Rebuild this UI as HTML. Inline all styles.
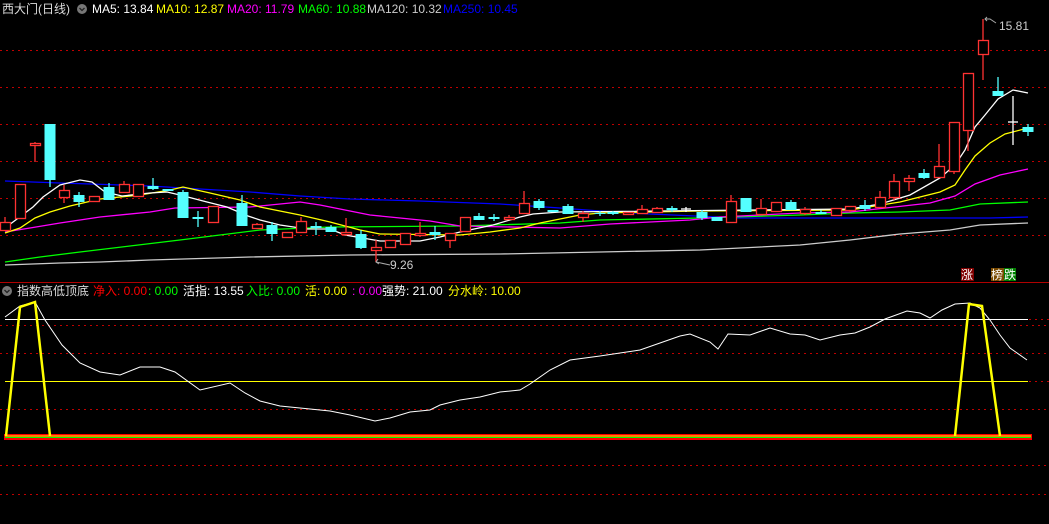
<!DOCTYPE html>
<html><head><meta charset="utf-8"><style>
body{margin:0;background:#000;width:1049px;height:524px;overflow:hidden;position:relative;font-family:"Liberation Sans","Noto Sans CJK SC",sans-serif;font-size:12px}
.t{position:absolute;white-space:nowrap;line-height:14px}
svg{position:absolute;left:0;top:0}
</style></head><body>
<svg width="1049" height="524" viewBox="0 0 1049 524">
<g stroke="#c00000" stroke-dasharray="2,4" stroke-width="1">
<line x1="0" y1="50.5" x2="1049" y2="50.5"/><line x1="0" y1="87.5" x2="1049" y2="87.5"/><line x1="0" y1="124.5" x2="1049" y2="124.5"/><line x1="0" y1="161.5" x2="1049" y2="161.5"/><line x1="0" y1="198.5" x2="1049" y2="198.5"/><line x1="0" y1="235.5" x2="1049" y2="235.5"/>
<line x1="0" y1="325.5" x2="1049" y2="325.5"/><line x1="0" y1="353.5" x2="1049" y2="353.5"/><line x1="0" y1="409.5" x2="1049" y2="409.5"/><line x1="0" y1="465.5" x2="1049" y2="465.5"/><line x1="0" y1="494.5" x2="1049" y2="494.5"/><line x1="1029" y1="381.5" x2="1049" y2="381.5"/><line x1="1029" y1="319.5" x2="1049" y2="319.5"/>
</g>
<line x1="0" y1="282.5" x2="1049" y2="282.5" stroke="#b00000"/>
<g fill="none" stroke-width="1.3">
<polyline stroke="#ccc" points="5,265 60,263 100,262 150,260 250,257 350,255 500,254 600,252 700,250 800,245 850,240 900,234 950,230 980,225 1028,223"/>
<polyline stroke="#00f" points="5,181 60,183 150,186 250,192 300,196 350,199 420,201 500,204 560,208 600,211 650,214 740,218 990,218 1028,217"/>
<polyline stroke="#0f0" points="5,262 40,257 80,252 130,246 180,240 260,230 330,227 460,226 560,223 600,220 700,218 800,215 850,213 900,212 950,210 980,204 1028,202"/>
<polyline stroke="#f0f" points="5,232 30,228 60,223 100,217 150,212 175,208 250,207 300,202 320,205 345,210 370,215 400,218 430,221 460,226 560,228 610,224 650,222 690,220 720,217 760,215 800,213 850,212 930,203 955,196 975,184 1000,175 1028,169"/>
<polyline stroke="#ff0" points="5,233 20,228 35,218 50,212 70,206 100,199 140,195 170,190 183,187 210,193 240,200 260,207 300,215 330,222 360,230 380,234 460,235 490,232 520,228 540,223 560,219 580,215 600,213 650,212 700,211 850,210 900,202 940,192 955,185 965,170 975,156 990,143 1005,134 1028,128"/>
<polyline stroke="#fff" points="5,228 33,207 43,197 60,185 80,180 92,182 105,192 122,196 150,193 167,192 180,195 207,202 227,207 248,216 260,220 280,225 307,229 330,229 345,235 380,241 420,241 440,237 460,232 493,225 520,217 533,214 560,212 850,209 880,204 910,195 940,178 955,165 965,150 975,127 985,115 998,99 1013,90 1028,93"/>
</g>
<g id="c" stroke-width="1.3">
</g>
<line x1="5" y1="319.5" x2="1028" y2="319.5" stroke="#fff"/>
<line x1="5" y1="381.5" x2="1028" y2="381.5" stroke="#ff0"/>
<polyline fill="none" stroke="#fff" stroke-width="1" points="5,317 20,306 35,302 45,320 62,345 80,363 100,372 120,375 140,367 160,367 175,372 200,390 230,383 245,393 260,401 280,406 300,408 330,411 350,415 375,421 390,418 410,412 430,410 440,405 460,400 480,397 500,392 520,390 530,384 550,370 570,360 600,356 620,353 640,350 660,343 680,336 690,334 710,342 718,349 728,334 750,335 770,328 790,334 805,335 820,340 840,335 855,333 870,327 885,319 907,311 920,313 930,318 942,310 955,304 970,303 980,308 990,320 1000,335 1010,348 1027,360"/>
<rect x="4" y="434" width="1028" height="6" fill="#f00"/>
<line x1="5" y1="436" x2="1031" y2="436" stroke="#ff0"/>
<line x1="5" y1="437.5" x2="1031" y2="437.5" stroke="#0f0"/>
<polyline fill="none" stroke="#ff0" stroke-width="2.5" points="6,436 20,307 35,302 50,436"/>
<polyline fill="none" stroke="#ff0" stroke-width="2.5" points="955,436 969,304 982,306 1000,436"/>
<g fill="none" stroke="#aaa" stroke-width="1"><polyline points="985,19 990,19 996,23"/><polyline points="376,262 390,265"/><polyline points="378,259 376,262 379,264"/><polyline points="987,17 985,19 987,21"/></g>
<text x="999" y="30" fill="#ccc" font-size="12" font-family="Liberation Sans">15.81</text>
<text x="390" y="269" fill="#ccc" font-size="12" font-family="Liberation Sans">9.26</text>
<rect x="961" y="268" width="13" height="13" fill="#800000"/>
<rect x="991" y="268" width="13" height="13" fill="#7a4a00"/>
<rect x="1004" y="268" width="12" height="13" fill="#008000"/>
<text x="961" y="279" fill="#fff" font-size="12" font-family="Noto Sans CJK SC">涨</text>
<text x="991" y="279" fill="#fff" font-size="12" font-family="Noto Sans CJK SC">榜</text>
<text x="1004" y="279" fill="#fff" font-size="12" font-family="Noto Sans CJK SC">跌</text>
<circle cx="82" cy="9" r="5" fill="#777"/><path d="M79.5 8 L82 10.5 L84.5 8" stroke="#222" fill="none" stroke-width="1.3"/>
<circle cx="7" cy="291" r="5" fill="#777"/><path d="M4.5 290 L7 292.5 L9.5 290" stroke="#222" fill="none" stroke-width="1.3"/>
</svg>
<script>
(function(){
var d=[
[5,222,230,217,230,'r'],[20,184,218,184,218,'r'],[35,143,145,142,162,'r'],[50,124,180,124,187,'c'],[64,190,197,185,203,'r'],[79,195,202,192,207,'c'],[94,196,201,196,201,'r'],[109,187,200,183,200,'c'],[124,184,192,181,192,'r'],[138,184,196,184,196,'r'],[153,186,189,178,190,'c'],[168,189,191,189,191,'c'],[183,192,218,190,218,'c'],[198,217,219,211,227,'c'],[213,206,222,206,222,'r'],[242,203,226,195,226,'c'],[257,224,228,223,228,'r'],
[272,225,234,222,241,'c'],[287,232,237,232,237,'r'],[301,221,232,217,232,'r'],[316,226,228,222,235,'c'],[331,227,232,225,232,'c'],[346,232,234,218,236,'r'],[361,234,248,230,249,'c'],[376,247,250,240,262,'r'],[390,240,247,240,247,'r'],[405,233,244,233,244,'r'],[420,233,235,222,237,'r'],[435,232,235,226,240,'c'],[450,233,240,233,248,'r'],[465,217,231,217,231,'r'],[479,216,220,213,220,'c'],[494,217,219,214,221,'c'],[509,217,219,215,219,'r'],[524,203,213,191,214,'r'],[539,201,208,199,210,'c'],[553,210,212,210,212,'c'],[568,206,214,204,214,'c'],[583,213,217,211,222,'r'],[600,213,214,211,216,'c'],[613,212,214,211,215,'c'],[628,212,214,212,214,'r'],[642,209,213,205,213,'r'],[657,208,212,207,212,'r'],[672,208,210,206,212,'c'],[686,209,210,207,212,'w'],[702,212,218,210,220,'c'],[717,217,221,217,221,'c'],[731,201,222,195,222,'r'],[746,198,212,198,212,'c'],[761,208,214,199,214,'r'],[776,202,211,202,212,'r'],[791,202,210,200,210,'c'],[805,209,213,207,215,'r'],[821,212,214,210,214,'c'],[836,208,215,208,215,'r'],[850,206,210,206,212,'r'],[865,205,209,200,211,'c'],[880,197,207,191,207,'r'],[894,181,197,174,200,'r'],[909,178,181,175,191,'r'],[924,173,178,169,179,'c'],[939,166,177,144,177,'r'],[954,122,171,122,174,'r'],[968,73,130,73,151,'r'],[983,40,54,19,80,'r'],[998,91,96,77,96,'c'],[1013,122,123,96,145,'w'],[1028,127,132,124,136,'c']];
var s='';
d.forEach(function(a){var x=a[0],col=a[5]=='r'?'#ff3232':a[5]=='c'?'#54ffff':'#fff';
s+='<line x1="'+x+'" y1="'+a[3]+'" x2="'+x+'" y2="'+a[4]+'" stroke="'+col+'"/>';
var h=Math.max(a[2]-a[1],1);
if(a[5]=='r')s+='<rect x="'+(x-5)+'.5" y="'+a[1]+'.5" width="10" height="'+h+'" fill="#000" stroke="'+col+'" stroke-width="1.3"/>';
else if(a[5]=='c')s+='<rect x="'+(x-5.5)+'" y="'+a[1]+'" width="11" height="'+h+'" fill="'+col+'"/>';
else s+='<line x1="'+(x-5)+'" y1="'+a[1]+'" x2="'+(x+5)+'" y2="'+a[1]+'" stroke="#fff"/>';
});
document.getElementById('c').innerHTML=s;
})();
</script>
<div class="t" style="left:2px;top:2px;color:#ddd;font-size:12px">西大门(日线)</div>
<div class="t" style="left:92px;top:2px;color:#fff">MA5: 13.84</div>
<div class="t" style="left:156px;top:2px;color:#ff0">MA10: 12.87</div>
<div class="t" style="left:227px;top:2px;color:#f0f">MA20: 11.79</div>
<div class="t" style="left:298px;top:2px;color:#0f0">MA60: 10.88</div>
<div class="t" style="left:367px;top:2px;color:#ccc">MA120: 10.32</div>
<div class="t" style="left:443px;top:2px;color:#00f">MA250: 10.45</div>
<div class="t" style="left:17px;top:284px;color:#ddd;font-size:12px">指数高低顶底</div>
<div class="t" style="left:93px;top:284px;color:#f00">净入: 0.00</div>
<div class="t" style="left:148px;top:284px;color:#0f0">: 0.00</div>
<div class="t" style="left:183px;top:284px;color:#fff">活指: 13.55</div>
<div class="t" style="left:246px;top:284px;color:#0f0">入比: 0.00</div>
<div class="t" style="left:305px;top:284px;color:#ff0">活: 0.00</div>
<div class="t" style="left:352px;top:284px;color:#f0f">: 0.00</div>
<div class="t" style="left:382px;top:284px;color:#fff">强势: 21.00</div>
<div class="t" style="left:448px;top:284px;color:#ff0">分水岭: 10.00</div>
</body></html>
